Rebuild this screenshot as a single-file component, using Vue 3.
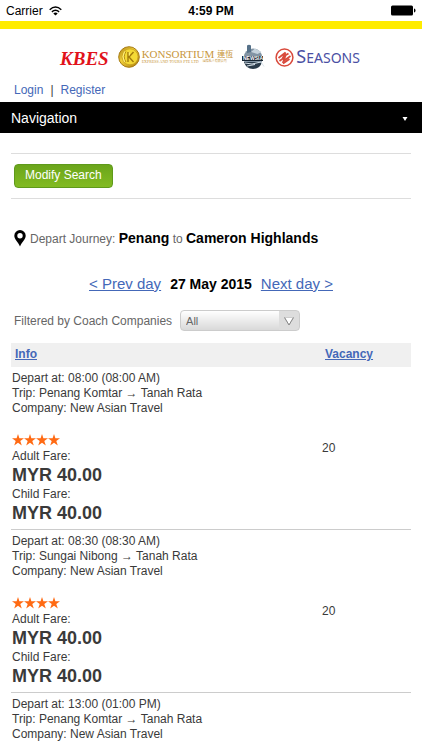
<template>
  <div class="app">
    <div class="status-bar">
      <div class="carrier">
        <span>Carrier</span>
        <svg width="13" height="10" viewBox="0 0 13 10" fill="none" stroke="#000">
          <path stroke-width="1.500" d="M.7 3.700Q6.500-1.700 12.300 3.700M2.900 5.900Q6.500 2.700 10.100 5.900" />
          <path fill="#000" stroke="none" d="M6.500 9.600L4.300 7.400Q6.500 5.700 8.700 7.400Z" />
        </svg>
      </div>
      <strong class="clock">4:59 PM</strong>
      <div class="battery">
        <svg width="26" height="11" viewBox="0 0 26 11">
          <rect x="1" y="0.500" width="22" height="10" rx="1.500" />
          <path d="M24 3.500q1.500 0 1.500 2t-1.500 2z" />
        </svg>
      </div>
    </div>

    <header class="brands">
      <span class="kbes">KBES</span>
      <div class="konsortium">
        <svg width="22" height="22" viewBox="0 0 22 22">
          <defs>
            <linearGradient id="coin" x1="0" y1="0" x2="1" y2="1">
              <stop offset="0" stop-color="#a87d12" />
              <stop offset="0.400" stop-color="#f0cf3a" />
              <stop offset="1" stop-color="#a87808" />
            </linearGradient>
          </defs>
          <circle cx="11" cy="11" r="10.300" fill="url(#coin)" stroke="#a87c14" />
          <circle cx="12" cy="10.800" r="8" fill="#f5da35" stroke="#c39b1f" stroke-width="0.700" />
          <path fill="none" stroke="#a27a0c" stroke-width="1.400" d="M10 6v10M15.500 6L11 11l4.500 5" />
          <path fill="none" stroke="#b58c14" stroke-width="1" d="M8 5.500q-3.500 5.300 0 10.500" />
          <path fill="none" stroke="#fff6a0" stroke-width="0.800" d="M6.500 5.500q-3 5 0 10.500M11.300 6.500v3" />
        </svg>
        <div class="konsortium-text">
          <div class="konsortium-row"><span>KONSORTIUM</span><span class="cjk">連恆</span></div>
          <div class="konsortium-sub"><span>EXPRESS AND TOURS PTE LTD</span><span class="cjk-small">國際私人有限公司</span></div>
        </div>
      </div>
      <svg class="newsia" width="24" height="26" viewBox="0 0 24 26">
        <circle cx="11" cy="14" r="9.500" fill="#8294a4" />
        <path fill="#567189" d="M5 9V1.500q2-1.500 4 0V8z" />
        <path fill="#c6d3dc" d="M9 8l4-3.500L19.500 8l-4 2z" />
        <path fill="#2b3b4a" d="M2 18h18q-2 7-9 7t-9-7z" />
        <path fill="#172431" d="M0 12h21v5H0z" />
        <path stroke="#d8e3eb" d="M3 19l7 1 9-2M5 22l8-1.500M19 18l3 4.500" fill="none" />
        <text x="1" y="16">NEWSIA</text>
      </svg>
      <div class="seasons">
        <svg width="19" height="19" viewBox="0 0 19 19" fill="none" stroke="#d94a3c">
          <circle cx="9.500" cy="9.500" r="8.400" stroke-width="1.500" />
          <path stroke-width="1.700" d="M3.500 10L10.500 4.500 8.500 8.500 13.500 5.500M4.500 13L10 9 8.500 13 15.500 8M8 15.500l6.500-4.500" />
        </svg>
        <span class="seasons-name"><span class="seasons-initial">S</span>EASONS</span>
      </div>
    </header>

    <div class="account">
      <a href="#">Login</a>
      <span>|</span>
      <a href="#">Register</a>
    </div>

    <button class="navigation" type="button">
      <span>Navigation</span>
      <svg width="6" height="4" viewBox="0 0 6 4"><path fill="#fff" d="M0.500 0h5L3 4z" /></svg>
    </button>

    <main class="content">
      <div class="modify">
        <button class="modify-btn" type="button">Modify Search</button>
      </div>

      <div class="journey">
        <svg width="12" height="17" viewBox="0 0 12 17">
          <path fill-rule="evenodd" d="M6 0a5.700 5.700 0 0 1 5.700 5.700C11.700 9.500 8 11.500 6 16.500 4 11.500.3 9.500.3 5.700A5.700 5.700 0 0 1 6 0zm0 3a2.700 2.700 0 1 0 0 5.400 2.700 2.700 0 0 0 0-5.400z" />
        </svg>
        <p>Depart Journey: <strong>Penang</strong> to <strong>Cameron Highlands</strong></p>
      </div>

      <nav class="days">
        <a href="#">&lt; Prev day</a>
        <strong>27 May 2015</strong>
        <a href="#">Next day &gt;</a>
      </nav>

      <div class="filter">
        <label for="company">Filtered by Coach Companies</label>
        <div class="select-wrap">
          <select id="company" v-model="company">
            <option>All</option>
          </select>
          <svg width="10" height="9" viewBox="0 0 10 9">
            <path fill="#fff" stroke="#ccc" d="M.5.500h9L5 8z" />
            <path fill="none" stroke="#888" d="M.5.500L5 8 9.500.500" />
          </svg>
        </div>
      </div>

      <table class="trips">
        <thead>
          <tr>
            <th><a href="#">Info</a></th>
            <th class="vacancy"><a href="#">Vacancy</a></th>
          </tr>
        </thead>
        <tbody>
          <tr v-for="trip in trips" :key="trip.time">
            <td>
              <div>Depart at: {{ trip.time }}</div>
              <div>Trip: {{ trip.from }} → {{ trip.to }}</div>
              <div>Company: {{ trip.company }}</div>
              <template v-if="trip.fare">
                <div class="stars">
                  <svg v-for="n in trip.stars" :key="n" width="12" height="12" viewBox="0 0 12 12">
                    <path fill="#ff6a13" d="M6 0l1.400 4.200H12L8.300 6.900l1.500 4.600L6 8.700l-3.800 2.800 1.500-4.600L0 4.200h4.600z" />
                  </svg>
                </div>
                <div>Adult Fare:</div>
                <div class="price">{{ trip.fare }}</div>
                <div>Child Fare:</div>
                <div class="price">{{ trip.fare }}</div>
              </template>
            </td>
            <td class="vacancy">{{ trip.vacancy }}</td>
          </tr>
        </tbody>
      </table>
    </main>
  </div>
</template>

<script setup>
import { ref } from 'vue'

const company = ref('All')

const trips = [
  { time: '08:00 (08:00 AM)', from: 'Penang Komtar', to: 'Tanah Rata', company: 'New Asian Travel', stars: 4, fare: 'MYR 40.00', vacancy: 20 },
  { time: '08:30 (08:30 AM)', from: 'Sungai Nibong', to: 'Tanah Rata', company: 'New Asian Travel', stars: 4, fare: 'MYR 40.00', vacancy: 20 },
  { time: '13:00 (01:00 PM)', from: 'Penang Komtar', to: 'Tanah Rata', company: 'New Asian Travel' }
]
</script>

<style>
body {
  margin: 0;
  background: #fff;
}
</style>

<style scoped>
.app {
  font-family: "Liberation Sans", Arial, sans-serif;
  font-size: 12px;
  color: #3a3a3a;
}

a {
  color: #4468b8;
}

button {
  font-family: inherit;
  cursor: pointer;
}

.status-bar {
  display: grid;
  grid-template-columns: 1fr auto 1fr;
  align-items: center;
  height: 21px;
  padding: 0 6px;
  color: #000;
}

.carrier {
  display: flex;
  align-items: center;
  gap: 6px;
}

.clock {
  font-size: 12px;
}

.battery {
  display: flex;
  justify-content: flex-end;
}

.brands {
  display: flex;
  align-items: center;
  justify-content: center;
  gap: 9px;
  height: 40px;
  padding: 8px 2px 0 0;
  border-top: 8px solid #ffec00;
}

.kbes {
  padding-top: 3px;
  font: italic bold 19px/22px "Liberation Serif", serif;
  color: #e1121b;
}

.konsortium {
  display: flex;
  align-items: center;
  gap: 2px;
  font-family: "Liberation Serif", "Noto Sans CJK TC", serif;
  color: #c8963c;
}

.konsortium-row {
  display: flex;
  gap: 3px;
  font-size: 11px;
  line-height: 9px;
}

.cjk {
  font-size: 8px;
}

.konsortium-sub {
  display: flex;
  gap: 4px;
  font-size: 4px;
  line-height: 5px;
}

.cjk-small {
  font-size: 3px;
}

.newsia text {
  font: bold 5px "Liberation Sans", sans-serif;
  fill: #fff;
}

.seasons {
  display: flex;
  align-items: center;
  gap: 2px;
}

.seasons-name {
  font: 14px/20px "Noto Sans", sans-serif;
  color: #4a4fa3;
}

.seasons-initial {
  font-size: 18px;
}

.account {
  display: flex;
  gap: 7px;
  padding: 6px 14px 4px;
  line-height: 15px;
}

.account a {
  text-decoration: none;
}

.navigation {
  display: flex;
  align-items: center;
  justify-content: space-between;
  width: 100%;
  height: 31px;
  padding: 0 14px 0 11px;
  border: 0;
  background: #000;
  color: #fff;
  font-size: 14px;
}

.navigation svg {
  margin-top: 3px;
}

.content {
  padding: 20px 11px 0;
}

.modify {
  padding: 10px 3px;
  border: solid #ddd;
  border-width: 1px 0;
}

.modify-btn {
  display: block;
  height: 24px;
  padding: 0 10px 2px;
  border: 1px solid #5f9a1b;
  border-radius: 4px;
  background: linear-gradient(#6ba51b, #82bb22);
  color: #fff;
  font-size: 12px;
}

.journey {
  display: flex;
  align-items: center;
  gap: 4px;
  padding: 30px 3px 0;
  color: #666;
}

.journey p {
  margin: 0;
  line-height: 18px;
}

.journey strong {
  font-size: 14px;
  color: #000;
}

.days {
  display: flex;
  justify-content: center;
  align-items: center;
  gap: 9px;
  padding-top: 27px;
  font-size: 15px;
  line-height: 18px;
}

.days strong {
  font-size: 14px;
  color: #000;
}

.filter {
  display: flex;
  align-items: center;
  gap: 8px;
  padding: 17px 3px 12px;
  color: #666;
}

.select-wrap {
  position: relative;
  width: 120px;
}

.select-wrap select {
  display: block;
  width: 100%;
  height: 21px;
  padding: 0 5px;
  appearance: none;
  border: 1px solid #ccc;
  border-radius: 4px;
  background: linear-gradient(to right, transparent 98px, #ddd 98px), linear-gradient(#fff, #d9d9d9);
  color: #666;
  font: 11px "Liberation Sans", Arial, sans-serif;
}

.select-wrap svg {
  position: absolute;
  top: 7px;
  right: 6px;
  pointer-events: none;
}

.trips {
  width: 100%;
  border-collapse: separate;
  border-spacing: 0;
  line-height: 15px;
}

.trips th {
  padding: 4px 4px 5px;
  text-align: left;
  background: #f0f0f0;
}

.trips td {
  padding: 4px 1px;
  vertical-align: middle;
  border-bottom: 1px solid #ccc;
}

.trips tr:last-child td {
  border-bottom: 0;
}

/* the header row is also a last child, it has no td */
.trips .vacancy {
  width: 82px;
  padding-left: 0;
}

.trips th.vacancy {
  padding-left: 3px;
}

.stars {
  display: flex;
  align-items: center;
  height: 15px;
  margin: 16px 0 2px;
}

.price {
  font-size: 18px;
  font-weight: bold;
  line-height: 23px;
}
</style>
